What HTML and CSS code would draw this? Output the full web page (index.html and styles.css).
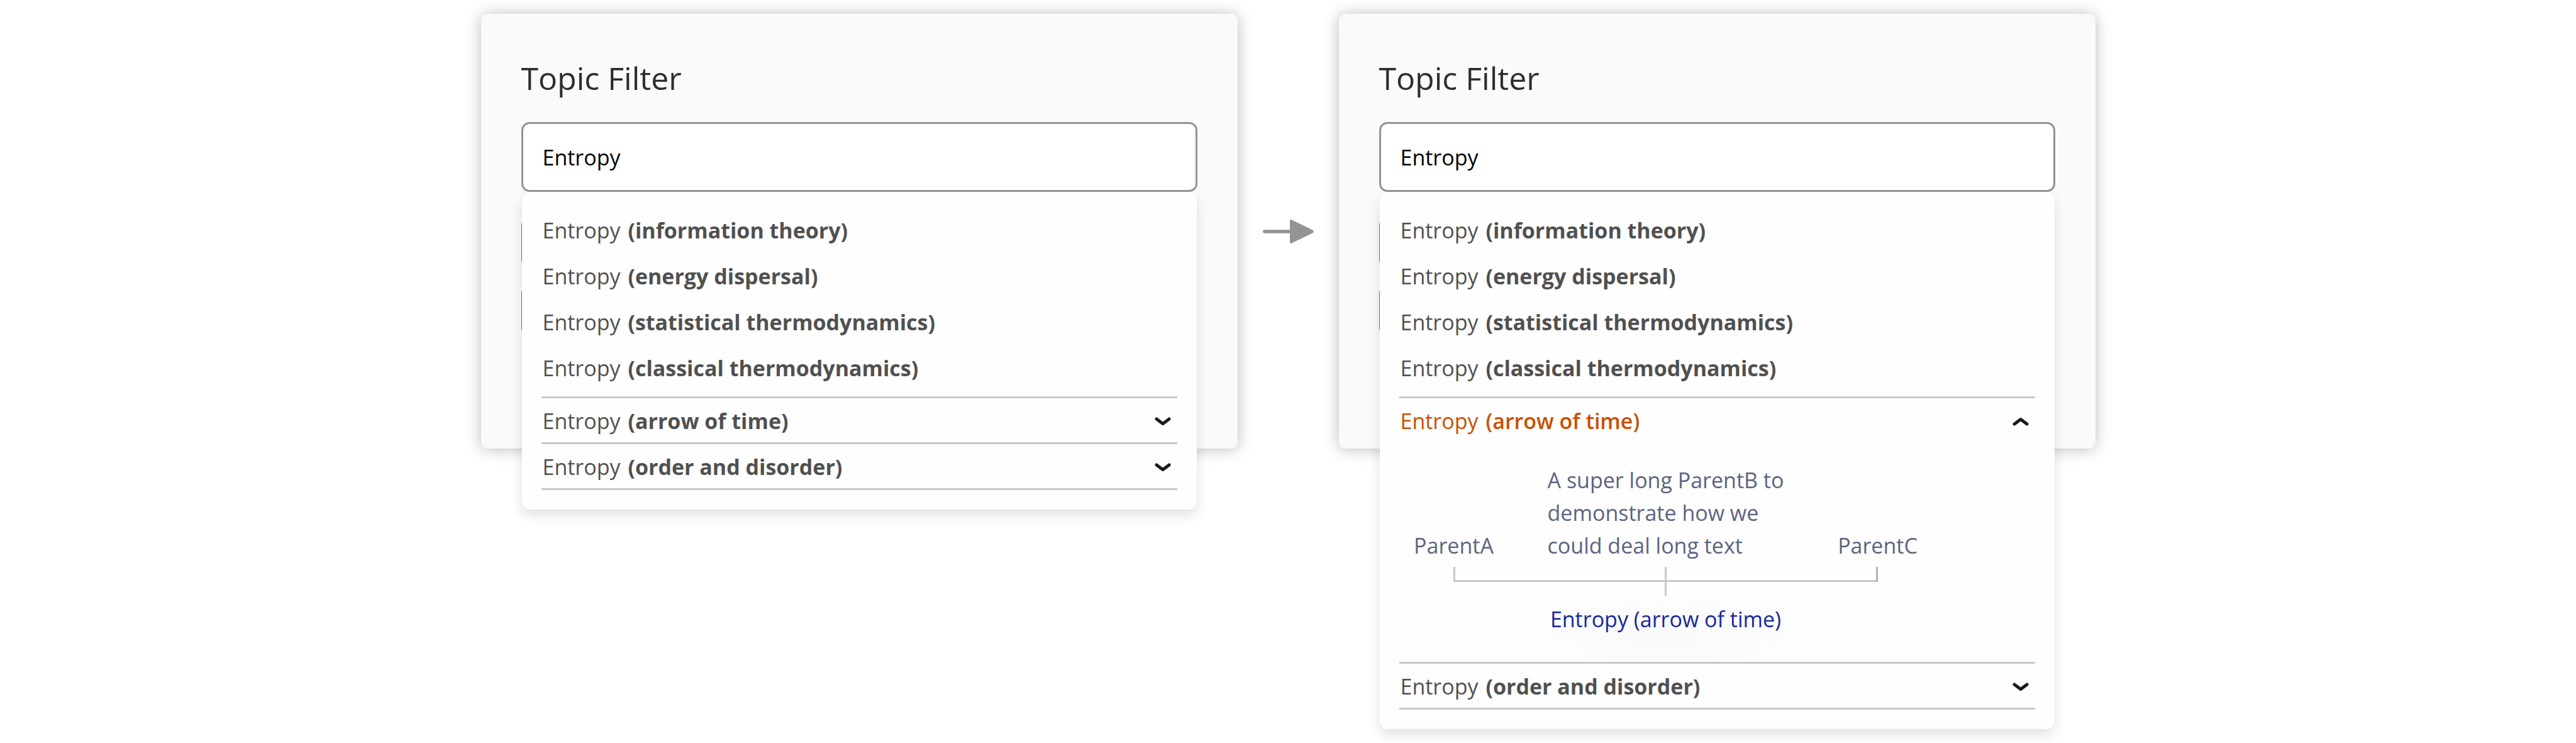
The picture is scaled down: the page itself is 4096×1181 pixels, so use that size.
FILE: index.html
```html
<!DOCTYPE html>
<html lang="en">
<head>
<meta charset="utf-8">
<title>Topic Filter</title>
<link rel="stylesheet" href="styles.css">
</head>
<body>
<main class="flow">
  <section class="card">
    <h2 class="title"><label for="topic-before">Topic Filter</label></h2>
    <div class="combo">
      <input class="field" id="topic-before" type="text" value="Entropy">
      <ul class="menu">
        <li><button class="option" type="button">Entropy <b>(information theory)</b></button></li>
        <li><button class="option" type="button">Entropy <b>(energy dispersal)</b></button></li>
        <li><button class="option" type="button">Entropy <b>(statistical thermodynamics)</b></button></li>
        <li><button class="option" type="button">Entropy <b>(classical thermodynamics)</b></button></li>
        <li class="group">
          <button class="option toggle" type="button" aria-expanded="false"><span>Entropy <b>(arrow of time)</b></span>
            <svg class="chevron" viewBox="0 0 26 14" aria-hidden="true"><path d="M3 3L13 10.500L23 3"/></svg></button>
        </li>
        <li class="group">
          <button class="option toggle" type="button" aria-expanded="false"><span>Entropy <b>(order and disorder)</b></span>
            <svg class="chevron" viewBox="0 0 26 14" aria-hidden="true"><path d="M3 3L13 10.500L23 3"/></svg></button>
        </li>
      </ul>
    </div>
    <div class="chips"><div class="chip"></div><div class="chip"></div></div>
  </section>

  <svg class="arrow" viewBox="0 0 81 40" aria-hidden="true">
    <path d="M3 17.300H43V3Q43 0 46 1.400L79 17.500Q83 20 79 22.500L46 38.600Q43 40 43 37V22.700H3Q0 22.700 0 20T3 17.300Z"/>
  </svg>

  <section class="card">
    <h2 class="title"><label for="topic-after">Topic Filter</label></h2>
    <div class="combo">
      <input class="field" id="topic-after" type="text" value="Entropy">
      <ul class="menu">
        <li><button class="option" type="button">Entropy <b>(information theory)</b></button></li>
        <li><button class="option" type="button">Entropy <b>(energy dispersal)</b></button></li>
        <li><button class="option" type="button">Entropy <b>(statistical thermodynamics)</b></button></li>
        <li><button class="option" type="button">Entropy <b>(classical thermodynamics)</b></button></li>
        <li class="group">
          <button class="option toggle open" type="button" aria-expanded="true"><span>Entropy <b>(arrow of time)</b></span>
            <svg class="chevron" viewBox="0 0 26 14" aria-hidden="true"><path d="M3 11L13 3.500L23 11"/></svg></button>
          <div class="tree">
            <div class="parents">
              <span>ParentA</span>
              <span class="long">A super long ParentB to<br>demonstrate how we<br>could deal long text</span>
              <span>ParentC</span>
            </div>
            <svg class="links" viewBox="0 0 675 46" aria-hidden="true">
              <path class="link" d="M1.500 0V22.500H673.500M337.500 0V46"/>
              <path class="link strong" d="M673.500 0V24"/>
            </svg>
            <a class="child" href="#arrow-of-time">Entropy (arrow of time)</a>
          </div>
        </li>
        <li class="group">
          <button class="option toggle" type="button" aria-expanded="false"><span>Entropy <b>(order and disorder)</b></span>
            <svg class="chevron" viewBox="0 0 26 14" aria-hidden="true"><path d="M3 3L13 10.500L23 3"/></svg></button>
        </li>
      </ul>
    </div>
    <div class="chips"><div class="chip"></div><div class="chip"></div></div>
  </section>
</main>
</body>
</html>
```

FILE: styles.css
```css
* {
  box-sizing: border-box;
}

body {
  margin: 0;
  background: #fff;
  color: #505050;
  font: 34px/52px "Open Sans", "Noto Sans", sans-serif;
}

.flow {
  display: grid;
  grid-template-columns: minmax(0, 1203px) 81px minmax(0, 1203px);
  gap: 40px;
  justify-content: center;
  align-items: start;
  min-height: 100vh;
  padding: 22px 40px;
}

.card {
  padding: 68px 64px 187px;
  border-radius: 11px;
  background: #fafafa;
  box-shadow: 0 1px 24px rgba(0, 0, 0, 0.27);
}

.title {
  margin: 0 0 36px;
  color: #2d2d2d;
  font-size: 50px;
  font-weight: 400;
  line-height: 68px;
}

.combo {
  position: relative;
}

.field {
  display: block;
  width: 100%;
  height: 111px;
  padding: 0 31px;
  border: 3px solid #949494;
  border-radius: 13px;
  background: #fff;
  color: #000;
  font: inherit;
}

/* Suggestion list, laid over the rest of the card */
.menu {
  position: absolute;
  z-index: 1;
  top: calc(100% + 1px);
  left: 1px;
  right: 1px;
  margin: 0;
  padding: 24px 31px 31px;
  border-radius: 13px;
  background: #fefefe;
  box-shadow: 0 9px 20px rgba(0, 0, 0, 0.12);
  list-style: none;
}

.option {
  display: block;
  width: 100%;
  padding: 0 0 0 2px;
  border: 0;
  background: none;
  color: inherit;
  font: inherit;
  line-height: 73px;
  text-align: left;
}

.option b {
  margin-left: 3px;
  font-weight: 700;
}

.group {
  border-bottom: 3px solid #c8c8c8;
}

li:not(.group) + .group {
  margin-top: 8px;
  border-top: 3px solid #c8c8c8;
}

.toggle {
  display: flex;
  align-items: center;
  justify-content: space-between;
  padding-top: 3px;
  padding-right: 10px;
  line-height: 67px;
}

.toggle.open {
  color: #c85000;
}

.open b {
  font-weight: 600;
}

.chevron {
  width: 26px;
  height: 14px;
  fill: none;
  stroke: #1a1a1a;
  stroke-width: 5;
  stroke-linecap: round;
  stroke-linejoin: round;
}

.chips {
  display: grid;
  gap: 43px;
  width: 60%;
  margin-top: 48px;
}

.chip {
  height: 65px;
  border: 2px solid #64789a;
  border-radius: 4px;
}

.arrow {
  width: 81px;
  height: 40px;
  margin-top: 326px;
  fill: #949494;
}

.tree {
  display: flex;
  flex-direction: column;
  align-items: center;
  width: 848px;
  max-width: 100%;
  padding: 34px 0 42px;
  background: radial-gradient(230px 80px at 50% 311px, #f9f9f9, rgba(254, 254, 254, 0));
}

.parents {
  display: grid;
  grid-template-columns: 174px 1fr 174px;
  align-items: end;
  justify-items: center;
  width: 100%;
  color: #5a6482;
}

.long {
  white-space: nowrap;
}

.links {
  width: 675px;
  height: 46px;
  margin: 8px 0 11px;
}

.link {
  fill: none;
  stroke: #c8c8c8;
  stroke-width: 3;
}

.strong {
  stroke: #b4b4b4;
}

.child {
  color: #1428a0;
  text-decoration: none;
}
```
